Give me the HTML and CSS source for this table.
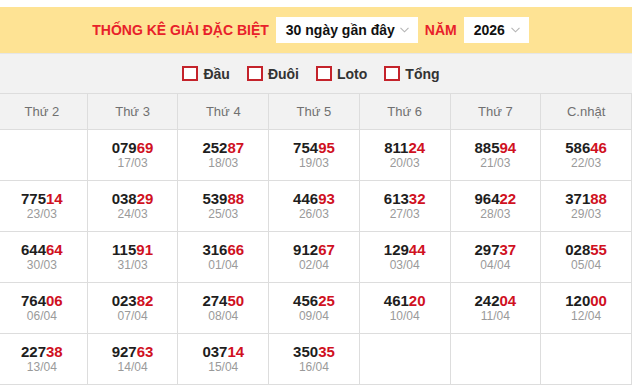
FILE: index.html
```html
<!DOCTYPE html>
<html lang="vi">
<head>
<meta charset="utf-8">
<title>Thống kê giải đặc biệt</title>
<link rel="stylesheet" href="styles.css">
</head>
<body>
<div class="filter">
  <span class="title">THỐNG KÊ GIẢI ĐẶC BIỆT</span>
  <div class="select select-range"><span>30 ngày gần đây</span><svg class="chev" width="9" height="6" viewBox="0 0 9 6"><polyline points="0.5,0.8 4.5,4.8 8.5,0.8" fill="none" stroke="#b5b5b5" stroke-width="1.1"/></svg></div>
  <span class="title">NĂM</span>
  <div class="select select-year"><span>2026</span><svg class="chev" width="9" height="6" viewBox="0 0 9 6"><polyline points="0.5,0.8 4.5,4.8 8.5,0.8" fill="none" stroke="#b5b5b5" stroke-width="1.1"/></svg></div>
</div>
<div class="options">
  <label class="opt"><span class="box"></span>Đầu</label>
  <label class="opt"><span class="box"></span>Đuôi</label>
  <label class="opt"><span class="box"></span>Loto</label>
  <label class="opt"><span class="box"></span>Tổng</label>
</div>
<table class="grid">
  <thead>
    <tr><th>Thứ 2</th><th>Thứ 3</th><th>Thứ 4</th><th>Thứ 5</th><th>Thứ 6</th><th>Thứ 7</th><th>C.nhật</th></tr>
  </thead>
  <tbody>
    <tr>
      <td></td>
      <td><div class="num">079<em>69</em></div><div class="date">17/03</div></td>
      <td><div class="num">252<em>87</em></div><div class="date">18/03</div></td>
      <td><div class="num">754<em>95</em></div><div class="date">19/03</div></td>
      <td><div class="num">811<em>24</em></div><div class="date">20/03</div></td>
      <td><div class="num">885<em>94</em></div><div class="date">21/03</div></td>
      <td><div class="num">586<em>46</em></div><div class="date">22/03</div></td>
    </tr>
    <tr>
      <td><div class="num">775<em>14</em></div><div class="date">23/03</div></td>
      <td><div class="num">038<em>29</em></div><div class="date">24/03</div></td>
      <td><div class="num">539<em>88</em></div><div class="date">25/03</div></td>
      <td><div class="num">446<em>93</em></div><div class="date">26/03</div></td>
      <td><div class="num">613<em>32</em></div><div class="date">27/03</div></td>
      <td><div class="num">964<em>22</em></div><div class="date">28/03</div></td>
      <td><div class="num">371<em>88</em></div><div class="date">29/03</div></td>
    </tr>
    <tr>
      <td><div class="num">644<em>64</em></div><div class="date">30/03</div></td>
      <td><div class="num">115<em>91</em></div><div class="date">31/03</div></td>
      <td><div class="num">316<em>66</em></div><div class="date">01/04</div></td>
      <td><div class="num">912<em>67</em></div><div class="date">02/04</div></td>
      <td><div class="num">129<em>44</em></div><div class="date">03/04</div></td>
      <td><div class="num">297<em>37</em></div><div class="date">04/04</div></td>
      <td><div class="num">028<em>55</em></div><div class="date">05/04</div></td>
    </tr>
    <tr>
      <td><div class="num">764<em>06</em></div><div class="date">06/04</div></td>
      <td><div class="num">023<em>82</em></div><div class="date">07/04</div></td>
      <td><div class="num">274<em>50</em></div><div class="date">08/04</div></td>
      <td><div class="num">456<em>25</em></div><div class="date">09/04</div></td>
      <td><div class="num">461<em>20</em></div><div class="date">10/04</div></td>
      <td><div class="num">242<em>04</em></div><div class="date">11/04</div></td>
      <td><div class="num">120<em>00</em></div><div class="date">12/04</div></td>
    </tr>
    <tr>
      <td><div class="num">227<em>38</em></div><div class="date">13/04</div></td>
      <td><div class="num">927<em>63</em></div><div class="date">14/04</div></td>
      <td><div class="num">037<em>14</em></div><div class="date">15/04</div></td>
      <td><div class="num">350<em>35</em></div><div class="date">16/04</div></td>
      <td></td>
      <td></td>
      <td></td>
    </tr>
  </tbody>
</table>
</body>
</html>
```

FILE: styles.css
```css
html, body {
  margin: 0;
  padding: 0;
  background: #fff;
  overflow: hidden;
}
body {
  font-family: "Liberation Sans", Arial, sans-serif;
  color: #222;
}
.filter {
  margin-top: 7px;
  height: 46px;
  background: #fee394;
  display: flex;
  align-items: center;
  justify-content: center;
  gap: 7px;
  padding-right: 11px;
}
.title {
  color: #e8212a;
  font-weight: bold;
  font-size: 14px;
}
.select {
  box-sizing: border-box;
  height: 26px;
  background: #fff;
  display: flex;
  align-items: center;
  justify-content: space-between;
  padding: 0 9px 0 10px;
  font-weight: bold;
  font-size: 14px;
  color: #111;
}
.select-range { width: 142px; }
.select-year { width: 65px; }
.chev { display: block; }
.options {
  box-sizing: border-box;
  height: 40px;
  background: #f2f2f2;
  border-top: 1px solid #e6e6e6;
  display: flex;
  align-items: center;
  justify-content: center;
  gap: 17px;
  padding-right: 10px;
}
.opt {
  display: flex;
  align-items: center;
  gap: 5px;
  font-weight: bold;
  font-size: 14px;
  color: #333;
}
.box {
  box-sizing: border-box;
  width: 16px;
  height: 15px;
  border: 2px solid #c4232b;
  background: #fff;
}
.grid {
  margin-left: -4px;
  width: 636px;
  table-layout: fixed;
  border-collapse: collapse;
  border-top: 1px solid #ddd;
}
.grid th, .grid td {
  border: 1px solid #ddd;
  text-align: center;
  padding: 0;
}
.grid th {
  height: 35px;
  background: #f2f2f2;
  font-weight: normal;
  font-size: 13px;
  color: #707070;
}
.grid td {
  height: 50px;
  vertical-align: middle;
  background: #fff;
}
.num {
  font-weight: bold;
  font-size: 15px;
  line-height: 17px;
  color: #1e1e1e;
}
.num em {
  font-style: normal;
  color: #d0111f;
}
.date {
  font-size: 12px;
  line-height: 15px;
  color: #9a9a9a;
}
```
